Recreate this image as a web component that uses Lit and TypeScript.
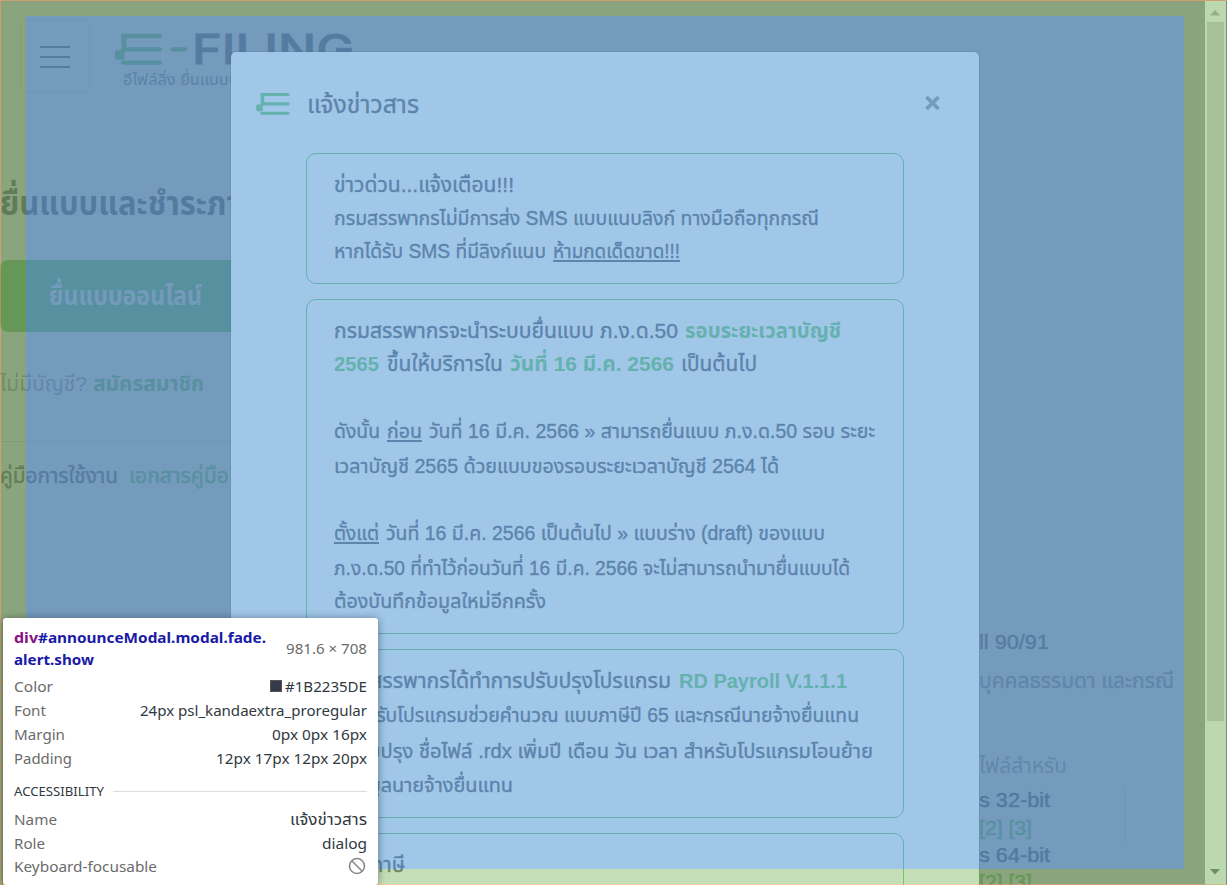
import { LitElement, html, css, svg } from "lit";
import { customElement, property } from "lit/decorators.js";

interface Run { t: string; w: number; k?: string; gap?: number }
interface Line { h: number; runs: Run[] }

/** One run of text, condensed or widened to a set measure. */
@customElement("fit-text")
class FitText extends LitElement {
  @property() text = "";
  @property({ type: Number }) w = 0;
  static styles = css`
    :host { display: block; flex: none; white-space: pre; }
    span { display: inline-block; transform-origin: 0 50%; }
  `;
  render() { return html`<span>${this.text}</span>`; }
  updated() {
    this.style.width = this.w + "px";
    const s = this.renderRoot.querySelector("span") as HTMLElement;
    s.style.transform = "none";
    const natural = s.getBoundingClientRect().width;
    if (natural) s.style.transform = `scaleX(${this.w / natural})`;
  }
}

const run = (r: Run) => html`<fit-text class=${r.k ?? "n"} style="margin-left:${r.gap ?? 0}px" .text=${r.t} .w=${r.w}></fit-text>`;
const lines = (ls: Line[]) => ls.map(l => html`<div class="line" style="height:${l.h}px">${l.runs.map(run)}</div>`);

const cards: Line[][] = [
  [
    { h: 34, runs: [{ t: "ข่าวด่วน...แจ้งเตือน!!!", w: 180, k: "b" }] },
    { h: 33, runs: [{ t: "กรมสรรพากรไม่มีการส่ง SMS แบบแนบลิงก์ ทางมือถือทุกกรณี", w: 485 }] },
    { h: 33, runs: [{ t: "หากได้รับ SMS ที่มีลิงก์แนบ", w: 212 }, { t: "ห้ามกดเด็ดขาด!!!", w: 127, gap: 7, k: "n u" }] },
  ],
  [
    { h: 34, runs: [{ t: "กรมสรรพากรจะนำระบบยื่นแบบ ภ.ง.ด.50", w: 344, k: "b" }, { t: "รอบระยะเวลาบัญชี", w: 156, gap: 7, k: "g" }] },
    { h: 33, runs: [{ t: "2565", w: 45, k: "g" }, { t: "ขึ้นให้บริการใน", w: 116, gap: 8, k: "b" }, { t: "วันที่ 16 มี.ค. 2566", w: 164, gap: 7, k: "g" }, { t: "เป็นต้นไป", w: 76, gap: 7, k: "b" }] },
    { h: 67, runs: [{ t: "ดังนั้น", w: 46 }, { t: "ก่อน", w: 35, gap: 7, k: "n u" }, { t: "วันที่ 16 มี.ค. 2566 » สามารถยื่นแบบ ภ.ง.ด.50 รอบ ระยะ", w: 446, gap: 7 }] },
    { h: 35, runs: [{ t: "เวลาบัญชี 2565 ด้วยแบบของรอบระยะเวลาบัญชี 2564 ได้", w: 445 }] },
    { h: 67, runs: [{ t: "ตั้งแต่", w: 45, k: "n u" }, { t: "วันที่ 16 มี.ค. 2566 เป็นต้นไป » แบบร่าง (draft) ของแบบ", w: 439, gap: 7 }] },
    { h: 35, runs: [{ t: "ภ.ง.ด.50 ที่ทำไว้ก่อนวันที่ 16 มี.ค. 2566 จะไม่สามารถนำมายื่นแบบได้", w: 516 }] },
    { h: 33, runs: [{ t: "ต้องบันทึกข้อมูลใหม่อีกครั้ง", w: 212 }] },
  ],
  [
    { h: 34, runs: [{ t: "กรมสรรพากรได้ทำการปรับปรุงโปรแกรม", w: 337, k: "b" }, { t: "RD Payroll V.1.1.1", w: 168, gap: 8, k: "g" }] },
    { h: 34, runs: [{ t: "- สำหรับโปรแกรมช่วยคำนวณ แบบภาษีปี 65 และกรณีนายจ้างยื่นแทน", w: 525 }] },
    { h: 36, runs: [{ t: "- ปรับปรุง ชื่อไฟล์ .rdx เพิ่มปี เดือน วัน เวลา สำหรับโปรแกรมโอนย้าย", w: 539 }] },
    { h: 34, runs: [{ t: "- ข้อมูลนายจ้างยื่นแทน", w: 179 }] },
  ],
  [{ h: 34, runs: [{ t: "แบบภาษี", w: 71, k: "b" }] }],
];

const mark = svg`
  <path d="M8 2H45M8 15.3H45M8 28.6H45" stroke-width="4.3" stroke-linecap="round" fill="none" stroke="currentColor"/>
  <path d="M8.9 2V18" stroke-width="4.8" fill="none" stroke="currentColor"/>
  <rect x="0" y="16.3" width="9.4" height="9.4" rx="2" fill="currentColor"/>`;

const pairs: [string, number, string, number][] = [
  ["Font", 32, "24px psl_kandaextra_proregular", 227],
  ["Margin", 51, "0px 0px 16px", 95],
  ["Padding", 58, "12px 17px 12px 20px", 151],
];

@customElement("app-root")
class AppRoot extends LitElement {
  static styles = css`
    :host { display: block; position: relative; width: 1227px; height: 885px; overflow: hidden; background: #fff;
      font-family: "Liberation Sans", "Noto Sans Thai", "Noto Sans", sans-serif; color: rgba(27,34,53,.87); }
    * { box-sizing: border-box; }
    .layer { position: absolute; inset: 0; overflow: hidden; }
    .page { display: flex; justify-content: space-between; width: 1205px; }
    .left { width: 420px; }
    .top { display: flex; height: 91px; padding: 20px 0 0 20px; }
    .menu { width: 70px; height: 72px; border: 1px solid rgba(0,0,0,.14); border-radius: 5px; display: grid; place-content: center; gap: 8px; padding-top: 1px; }
    .menu i { display: block; width: 30px; height: 2px; background: #454c5c; }
    .brand { margin-left: 25px; padding-top: 14px; color: #54c255; }
    .word { display: flex; align-items: flex-start; height: 31px; }
    .word svg { flex: none; overflow: visible; }
    .filing { font: 500 41px/31px Inter, sans-serif; color: #454c5c; margin-left: 4px; -webkit-text-stroke: .8px; }
    .sub { margin-left: 8px; font-size: 16px; line-height: 30px; color: #6e7480; }
    .line { display: flex; align-items: flex-end; line-height: 34px; }
    .n { font-size: 20px; -webkit-text-stroke: .45px; }
    .b { font-size: 21px; -webkit-text-stroke: .45px; }
    .g { font-size: 21px; font-weight: 700; color: #54c255; }
    .u { background: linear-gradient(currentColor, currentColor) 0 26px / 100% 2px no-repeat; }
    .h1 { font-size: 34px; font-weight: 700; }
    .thin { font-size: 21px; opacity: .6; }
    .med { font-size: 21px; opacity: .9; -webkit-text-stroke: .5px; }
    .semi { font-size: 20px; -webkit-text-stroke: .5px; }
    .soft { font-size: 21px; opacity: .6; -webkit-text-stroke: .5px; }
    .link { font-size: 21px; color: #54c255; -webkit-text-stroke: .5px; }
    .cta { margin-top: 40px; height: 72px; width: 300px; border-radius: 8px; background: #54c255; color: #fff; padding-left: 49px; font-size: 26px; font-weight: 700; line-height: 72px; }
    .rule { height: 1px; background: #dcdcdc; margin: 40px 0 16px; }
    .right { width: 228px; padding: 625px 0 0 2px; }
    .cols { display: flex; justify-content: space-between; }
    .vr { width: 1px; height: 54px; background: #c8c8cc; margin: 5px 80px 0 0; }
    .dim { background: rgba(0,0,0,.5); }
    .modal { position: absolute; left: 230px; top: 51px; width: 750px; height: 900px; background: #fff; background-clip: padding-box; border: 1px solid rgba(0,0,0,.2); border-radius: 6px; }
    .head { display: flex; height: 101px; padding-left: 25px; color: #54c255; }
    .head svg.m { margin: 41px 0 0 0; overflow: visible; flex: none; }
    .title { margin: 36px 0 0 18px; font-size: 24px; line-height: 34px; color: rgba(27,34,53,.87); -webkit-text-stroke: .4px; }
    .close { margin: 43px 0 0 auto; padding-right: 39px; color: #7f7f7f; }
    .cards { display: grid; gap: 15px; width: 598px; margin-left: 75px; }
    .card { border: 1px solid #54c255; border-radius: 10px; padding: 14px 0 15px 27px; }
    .inspect { display: grid; grid-template: 15px 853px 16px / 25px 1158px 21px; border: 1px solid rgba(246,178,107,.66); width: 1227px; border-right: 0; background: none; }
    .inspect i { background: rgba(147,196,125,.55); }
    .inspect .t, .inspect .bt { grid-column: 1 / -1; }
    .inspect .c { background: rgba(111,168,220,.66); }
    .bar { position: absolute; right: 0; top: 1px; width: 22px; height: 884px; background: #bbd8ae; border-right: 1px solid #7a8a78; padding: 21px 2px 0; border-bottom: 1px solid #d0bd80; }
    .bar div { height: 699px; background: #a6c097; }
    .bar svg { position: absolute; left: 5px; }
    .up { top: 9px; } .down { bottom: 9px; }
    .tip { position: absolute; left: 3px; top: 618px; width: 375px; height: 267px; background: #fff; border-radius: 3px; padding: 8px 11px 0; box-shadow: 0 1px 8px rgba(0,0,0,.4); font: 15px/24px "Noto Sans", "Noto Sans Thai", sans-serif; color: #303942; }
    .sel { display: flex; justify-content: space-between; align-items: center; line-height: 22px; height: 48px; padding-bottom: 4px; color: #1a1aa6; font-weight: 700; }
    .sel div div { display: flex; }
    .sel .tag { color: #881280; }
    .sel .size, .k { color: #6b6b6b; font-weight: 400; }
    .kv { display: flex; justify-content: space-between; height: 24px; }
    .val { display: flex; align-items: center; gap: 3px; }
    .sw { width: 12px; height: 12px; background: #343a4b; border: 1px solid #555; }
    .acc { display: flex; align-items: center; gap: 9px; font-size: 12.5px; line-height: 24px; margin: 9px 0 4px; }
    .acc fit-text { margin-top: 1px; height: 23px; }
    .acc hr { flex: 1; border: 0; height: 1px; background: #ddd; margin: 0; }
    .last { margin-top: -1px; }
  `;

  render() {
    return html`
      <div class="layer page">
        <div class="left">
          <div class="top">
            <div class="menu"><i></i><i></i><i></i></div>
            <div class="brand">
              <div class="word">
                <svg width="73" height="31">${mark}<path d="M57.500 15.300H70.500" stroke-width="4.300" stroke-linecap="round" stroke="currentColor"/></svg>
                <fit-text class="filing" .text=${"FILING"} .w=${162}></fit-text>
              </div>
              <fit-text class="sub" .text=${"อีไฟล์ลิ่ง ยื่นแบบแ"} .w=${115}></fit-text>
            </div>
          </div>
          ${lines([{ h: 129, runs: [{ t: "ยื่นแบบและชำระภา", w: 240, k: "h1" }] }])}
          <div class="cta"><fit-text .text=${"ยื่นแบบออนไลน์"} .w=${153}></fit-text></div>
          ${lines([{ h: 69, runs: [{ t: "ไม่มีบัญชี?", w: 87, k: "thin" }, { t: "สมัครสมาชิก", w: 111, gap: 6, k: "g" }] }])}
          <div class="rule"></div>
          ${lines([{ h: 35, runs: [{ t: "คู่มือการใช้งาน", w: 118, k: "med" }, { t: "เอกสารคู่มือ", w: 100, gap: 11, k: "link" }] }])}
        </div>
        <div class="right">
          ${lines([
            { h: 34, runs: [{ t: "ll 90/91", w: 70, k: "med" }] },
            { h: 39, runs: [{ t: "บุคคลธรรมดา และกรณี", w: 195, k: "soft" }] },
            { h: 85, runs: [{ t: "ไฟล์สำหรับ", w: 88, k: "thin" }] },
          ])}
          <div class="cols">
            <div>${lines([
              { h: 34, runs: [{ t: "s 32-bit", w: 71, k: "semi" }] },
              { h: 28, runs: [{ t: "[2] [3]", w: 53, k: "link" }] },
              { h: 27, runs: [{ t: "s 64-bit", w: 71, k: "semi" }] },
              { h: 27, runs: [{ t: "[2] [3]", w: 53, k: "link" }] },
            ])}</div>
            <div class="vr"></div>
          </div>
        </div>
      </div>
      <div class="layer dim"></div>
      <div class="modal">
        <div class="head">
          <svg class="m" width="33" height="22" viewBox="0 0 46 31">${mark}</svg>
          <fit-text class="title" .text=${"แจ้งข่าวสาร"} .w=${112}></fit-text>
          <div class="close"><svg width="15" height="16"><path d="M1.500 2L13.500 14M13.500 2L1.500 14" stroke="currentColor" stroke-width="3.800"/></svg></div>
        </div>
        <div class="cards">${cards.map(c => html`<div class="card">${lines(c)}</div>`)}</div>
      </div>
      <div class="layer inspect"><i class="t"></i><i></i><i class="c"></i><i></i><i class="bt"></i></div>
      <div class="bar">
        <svg class="up" width="10" height="6"><path d="M0 5.500L5 0L10 5.500Z" fill="#93ad85"/></svg>
        <div></div>
        <svg class="down" width="10" height="6"><path d="M0 0H10L5 5.500Z" fill="#6f8d66"/></svg>
      </div>
      <div class="tip">
        <div class="sel">
          <div>
            <div><fit-text class="tag" .text=${"div"} .w=${24}></fit-text><fit-text .text=${"#announceModal.modal.fade."} .w=${228}></fit-text></div>
            <fit-text .text=${"alert.show"} .w=${80}></fit-text>
          </div>
          <fit-text class="size" .text=${"981.6 × 708"} .w=${81}></fit-text>
        </div>
        <div class="kv"><fit-text class="k" .text=${"Color"} .w=${39}></fit-text><div class="val"><div class="sw"></div><fit-text .text=${"#1B2235DE"} .w=${82}></fit-text></div></div>
        ${pairs.map(([k, kw, v, vw]) => html`<div class="kv"><fit-text class="k" .text=${k} .w=${kw}></fit-text><fit-text .text=${v} .w=${vw}></fit-text></div>`)}
        <div class="acc"><fit-text .text=${"ACCESSIBILITY"} .w=${90}></fit-text><hr></div>
        <div class="kv"><fit-text class="k" .text=${"Name"} .w=${43}></fit-text><fit-text .text=${"แจ้งข่าวสาร"} .w=${77}></fit-text></div>
        <div class="kv"><fit-text class="k" .text=${"Role"} .w=${31}></fit-text><fit-text .text=${"dialog"} .w=${45}></fit-text></div>
        <div class="kv last"><fit-text class="k" .text=${"Keyboard-focusable"} .w=${143}></fit-text>
          <div class="val"><svg width="19" height="18"><circle cx="9" cy="9" r="7.500" fill="none" stroke="#8a8a8a" stroke-width="1.600"/><path d="M4 4L14 14" stroke="#8a8a8a" stroke-width="1.600"/></svg></div></div>
      </div>`;
  }
}
